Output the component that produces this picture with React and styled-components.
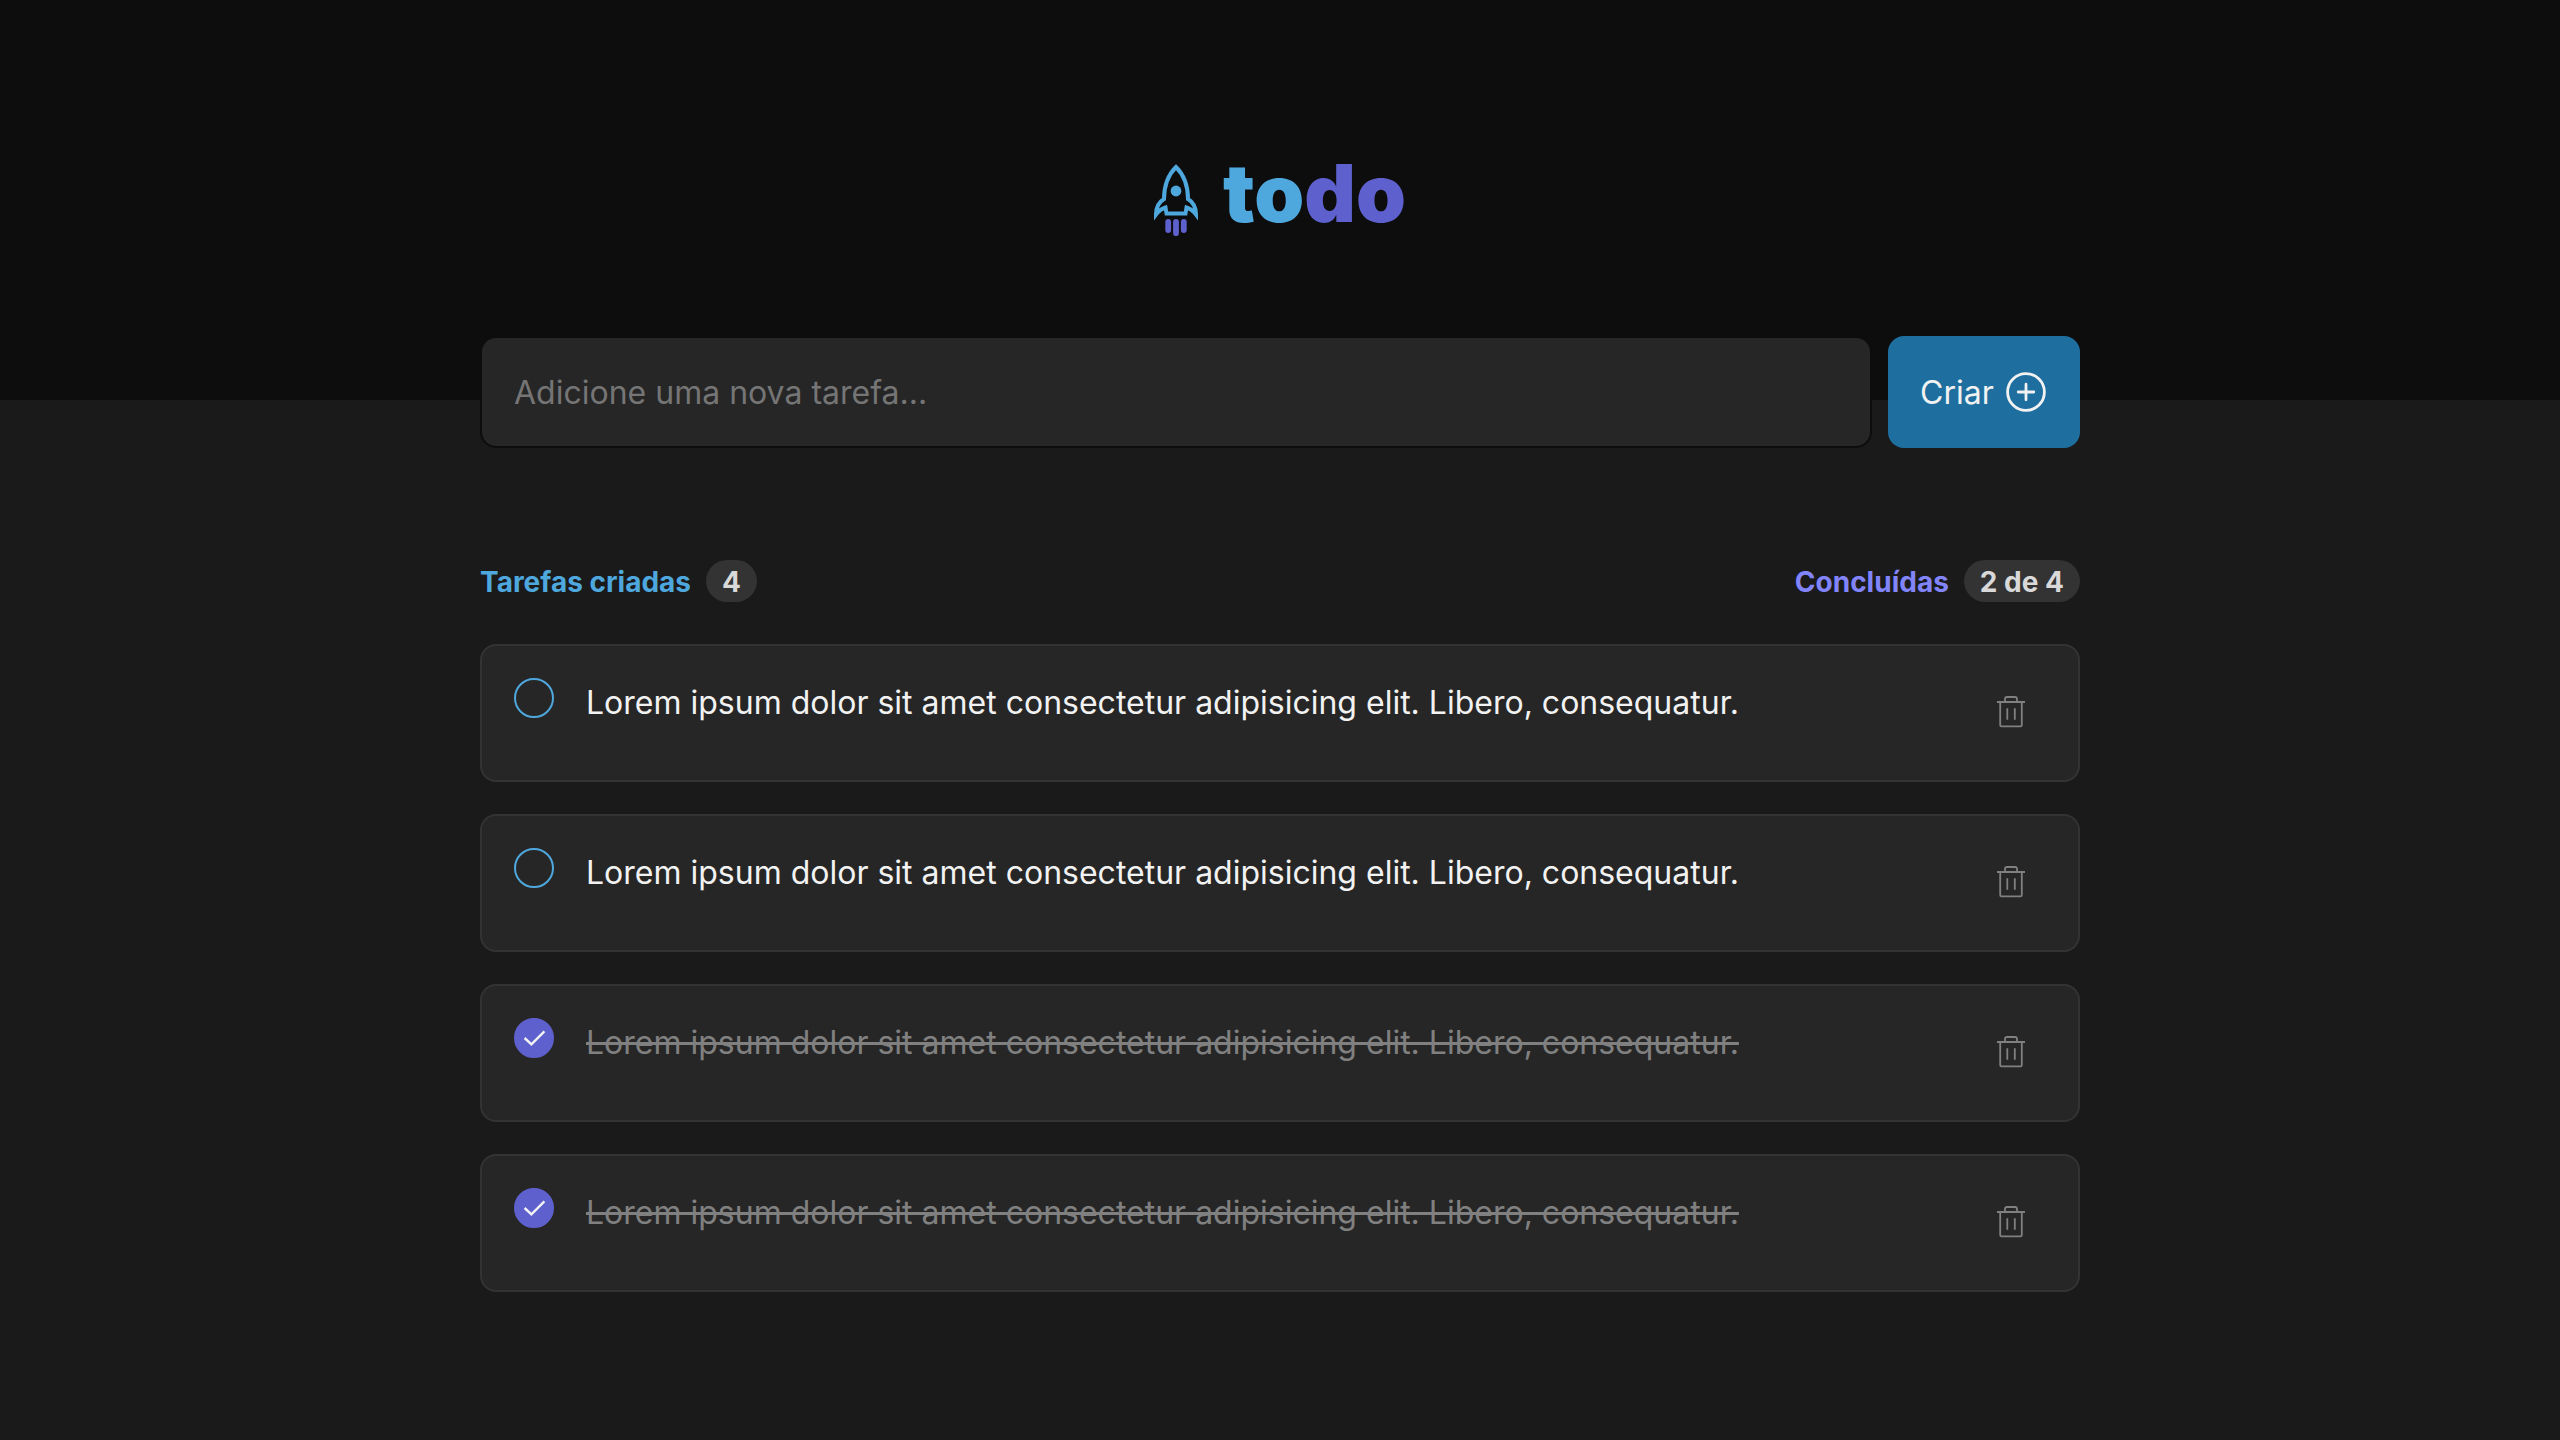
import React, { useState } from "react";
import styled, { createGlobalStyle, css } from "styled-components";

const colors = {
  blue: "#4ea8de",
  blueDark: "#1e6f9f",
  purple: "#8284fa",
  purpleDark: "#5e60ce",
  gray700: "#0d0d0d",
  gray600: "#1a1a1a",
  gray500: "#262626",
  gray400: "#333333",
  gray350: "#757575",
  gray300: "#808080",
  gray200: "#d9d9d9",
  gray100: "#f2f2f2",
};

const GlobalStyle = createGlobalStyle`
  * { box-sizing: border-box; margin: 0; padding: 0; }
  body {
    background: ${colors.gray600};
    color: ${colors.gray100};
    font-family: Inter, "Liberation Sans", sans-serif;
    font-size: 32px;
  }
  input, button { font: inherit; color: inherit; }
`;

const Header = styled.header`
  display: flex;
  align-items: center;
  justify-content: center;
  gap: 25px;
  height: 400px;
  background: ${colors.gray700};
`;

const Brand = styled.h1`
  padding-bottom: 14px;
  font-size: 80px;
  font-weight: 900;
  line-height: 80px;
  color: ${colors.blue};
`;

const BrandEnd = styled.span`
  color: ${colors.purpleDark};
`;

const Main = styled.main`
  width: 100%;
  max-width: 1600px;
  margin: -64px auto 0;
  padding-bottom: 112px;
`;

const Form = styled.form`
  display: flex;
  gap: 16px;
`;

const TaskInput = styled.input`
  flex: 1;
  min-width: 0;
  height: 112px;
  padding: 0 32px;
  background: ${colors.gray500};
  border: 2px solid ${colors.gray700};
  border-radius: 16px;
  outline: none;
  &::placeholder { color: ${colors.gray350}; opacity: 1; }
`;

const CreateButton = styled.button`
  display: flex;
  align-items: center;
  gap: 12px;
  width: 192px;
  padding-left: 32px;
  background: ${colors.blueDark};
  border: 0;
  border-radius: 16px;
  cursor: pointer;
  &:hover { background: ${colors.blue}; }
`;

const Summary = styled.div`
  display: flex;
  justify-content: space-between;
  margin: 112px 0 42px;
`;

const Counter = styled.p`
  display: flex;
  align-items: center;
  gap: 15px;
  font-size: 28px;
  line-height: 40px;
  font-weight: 700;
  color: ${(p) => p.$color};
`;

const CounterLabel = styled.span`
  padding-top: 2px;
`;

const Badge = styled.span`
  padding: 2px 16px 0;
  background: ${colors.gray400};
  border-radius: 21px;
  color: ${colors.gray200};
`;

const List = styled.ul`
  display: grid;
  gap: 32px;
  list-style: none;
`;

const Card = styled.li`
  display: flex;
  align-items: flex-start;
  gap: 32px;
  padding: 32px;
  background: ${colors.gray500};
  border: 2px solid ${colors.gray400};
  border-radius: 16px;
`;

const CheckBox = styled.span`
  display: grid;
  flex: none;
  width: 40px;
  height: 40px;
  > * { grid-area: 1 / 1; }
  svg { pointer-events: none; }
`;

const Check = styled.input`
  appearance: none;
  border: 2px solid ${colors.blue};
  border-radius: 50%;
  cursor: pointer;
  &:checked {
    background: ${colors.purpleDark};
    border-color: ${colors.purpleDark};
  }
`;

const TaskText = styled.label`
  flex: 1;
  line-height: 50px;
  cursor: pointer;
  ${(p) =>
    p.$done &&
    css`
      color: ${colors.gray300};
      text-decoration: line-through;
    `}
`;

const DeleteButton = styled.button`
  display: grid;
  place-items: center;
  flex: none;
  width: 70px;
  height: 70px;
  background: transparent;
  border: 0;
  border-radius: 8px;
  color: ${colors.gray300};
  cursor: pointer;
`;

const Rocket = () => (
  <svg width="44" height="72" viewBox="0 0 44 72" fill="none" aria-hidden="true">
    <path
      d="M22 3C15 10 10 21 10 35C5 38 2 42 2 50.5C5 46.5 8 44.5 11.5 43.5L12.5 49.5H31.5L32.5 43.5C36 44.5 39 46.5 42 50.5C42 42 39 38 34 35C34 21 29 10 22 3Z"
      stroke={colors.blue}
      strokeWidth="4"
    />
    <circle cx="22" cy="27" r="5.4" fill={colors.blue} />
    <path d="M14.2 57.8V66M22 57.8V69.2M29.8 57.8V66" stroke={colors.purpleDark} strokeWidth="5.8" strokeLinecap="round" />
  </svg>
);

const PlusCircle = () => (
  <svg width="40" height="40" viewBox="0 0 40 40" fill="none" stroke="currentColor" strokeWidth="2.8" aria-hidden="true">
    <circle cx="20" cy="20" r="18.4" />
    <path d="M20 12.2V27.8M12.2 20H27.8" strokeLinecap="round" />
  </svg>
);

const Tick = () => (
  <svg width="40" height="40" viewBox="0 0 40 40" fill="none" stroke={colors.gray100} strokeWidth="2.4" aria-hidden="true">
    <path d="M10.6 20L17.4 26.3L30.4 13.4" />
  </svg>
);

const Trash = () => (
  <svg width="28" height="34" viewBox="0 0 28 34" fill="none" stroke="currentColor" strokeWidth="1.8" aria-hidden="true">
    <path d="M0 6H28M3.2 6V29Q3.2 30.3 4.5 30.3H23.5Q24.8 30.3 24.8 29V6M8 6V3Q8 1 10 1H18Q20 1 20 3V6" />
    <path d="M10.3 12.3V23.7M17.8 12.3V23.7" />
  </svg>
);

const sentence = "Lorem ipsum dolor sit amet consectetur adipisicing elit. Libero, consequatur.";

const initialTasks = [
  { id: 1, text: sentence, done: false },
  { id: 2, text: sentence, done: false },
  { id: 3, text: sentence, done: true },
  { id: 4, text: sentence, done: true },
];

export default function App() {
  const [tasks, setTasks] = useState(initialTasks);
  const [draft, setDraft] = useState("");

  const addTask = (event) => {
    event.preventDefault();
    if (!draft.trim()) return;
    setTasks([...tasks, { id: Date.now(), text: draft.trim(), done: false }]);
    setDraft("");
  };

  const toggle = (id) => setTasks(tasks.map((t) => (t.id === id ? { ...t, done: !t.done } : t)));
  const remove = (id) => setTasks(tasks.filter((t) => t.id !== id));
  const doneCount = tasks.filter((t) => t.done).length;

  return (
    <>
      <GlobalStyle />
      <Header>
        <Rocket />
        <Brand>
          to<BrandEnd>do</BrandEnd>
        </Brand>
      </Header>
      <Main>
        <Form onSubmit={addTask}>
          <TaskInput
            aria-label="Adicione uma nova tarefa"
            placeholder="Adicione uma nova tarefa..."
            value={draft}
            onChange={(e) => setDraft(e.target.value)}
          />
          <CreateButton type="submit">
            Criar
            <PlusCircle />
          </CreateButton>
        </Form>
        <Summary>
          <Counter $color={colors.blue}>
            <CounterLabel>Tarefas criadas</CounterLabel>
            <Badge>{tasks.length}</Badge>
          </Counter>
          <Counter $color={colors.purple}>
            <CounterLabel>Concluídas</CounterLabel>
            <Badge>{`${doneCount} de ${tasks.length}`}</Badge>
          </Counter>
        </Summary>
        <List>
          {tasks.map((task) => (
            <Card key={task.id}>
              <CheckBox>
                <Check
                  type="checkbox"
                  id={`task-${task.id}`}
                  checked={task.done}
                  onChange={() => toggle(task.id)}
                />
                {task.done && <Tick />}
              </CheckBox>
              <TaskText htmlFor={`task-${task.id}`} $done={task.done}>
                {task.text}
              </TaskText>
              <DeleteButton type="button" aria-label="Excluir tarefa" onClick={() => remove(task.id)}>
                <Trash />
              </DeleteButton>
            </Card>
          ))}
        </List>
      </Main>
    </>
  );
}
